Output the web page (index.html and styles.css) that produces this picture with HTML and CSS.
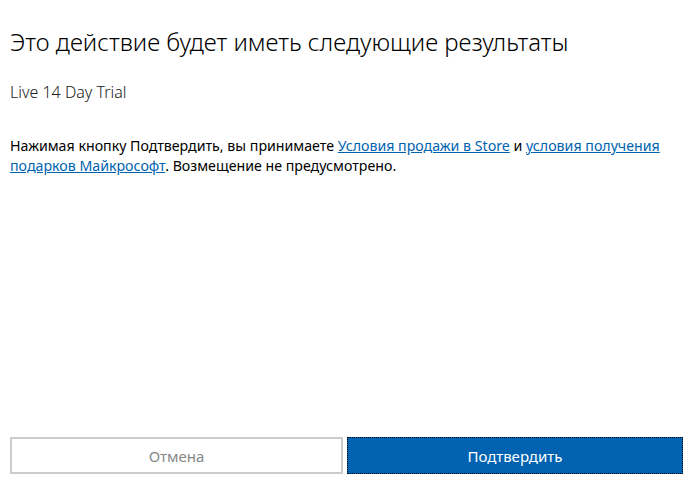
FILE: index.html
```html
<!DOCTYPE html>
<html lang="ru">
<head>
    <meta charset="UTF-8">
    <meta name="viewport" content="width=device-width, initial-scale=1.0">
    <title>Подтверждение покупки</title>
    <link rel="stylesheet" href="styles.css">
</head>
<body>
    <div class="dialog">
        <h1 class="title">Это действие будет иметь следующие результаты</h1>
        <div class="product">Live 14 Day Trial</div>
        <p class="terms">
            Нажимая кнопку Подтвердить, вы принимаете <a href="#">Условия продажи в Store</a> и <a href="#">условия получения подарков Майкрософт</a>. Возмещение не предусмотрено.
        </p>
        <div class="actions">
            <button class="btn btn-cancel">Отмена</button>
            <button class="btn btn-confirm">Подтвердить</button>
        </div>
    </div>
</body>
</html>
```

FILE: styles.css
```css
html, body {
    margin: 0;
    height: 100%;
}

body {
    font-family: "Noto Sans", "Open Sans", sans-serif;
    color: #000;
    background: #fff;
}

.dialog {
    display: flex;
    flex-direction: column;
    height: 100%;
    box-sizing: border-box;
    padding: 0 10px 23px 10px;
}

.title {
    margin: 26px 0 0 0;
    font-size: 24px;
    font-weight: 300;
    line-height: 32px;
}

.product {
    margin-top: 23px;
    font-size: 16px;
    font-weight: 300;
    color: #222;
    line-height: 22px;
}

.terms {
    margin: 33px 0 0 0;
    font-size: 14.2px;
    line-height: 20px;
}

.terms a {
    color: #0063b1;
    text-decoration: underline;
}

.actions {
    margin-top: auto;
    display: flex;
    gap: 4px;
}

.btn {
    height: 37px;
    font-family: inherit;
    font-size: 15px;
    border: none;
    padding: 0;
    cursor: pointer;
}

.btn-cancel {
    width: 333px;
    background: #fff;
    color: #888;
    border: 2px solid #ccc;
}

.btn-confirm {
    flex: 1;
    background: #0063b1;
    color: #fff;
    outline: 1px dotted #000;
    outline-offset: -1px;
}
```
